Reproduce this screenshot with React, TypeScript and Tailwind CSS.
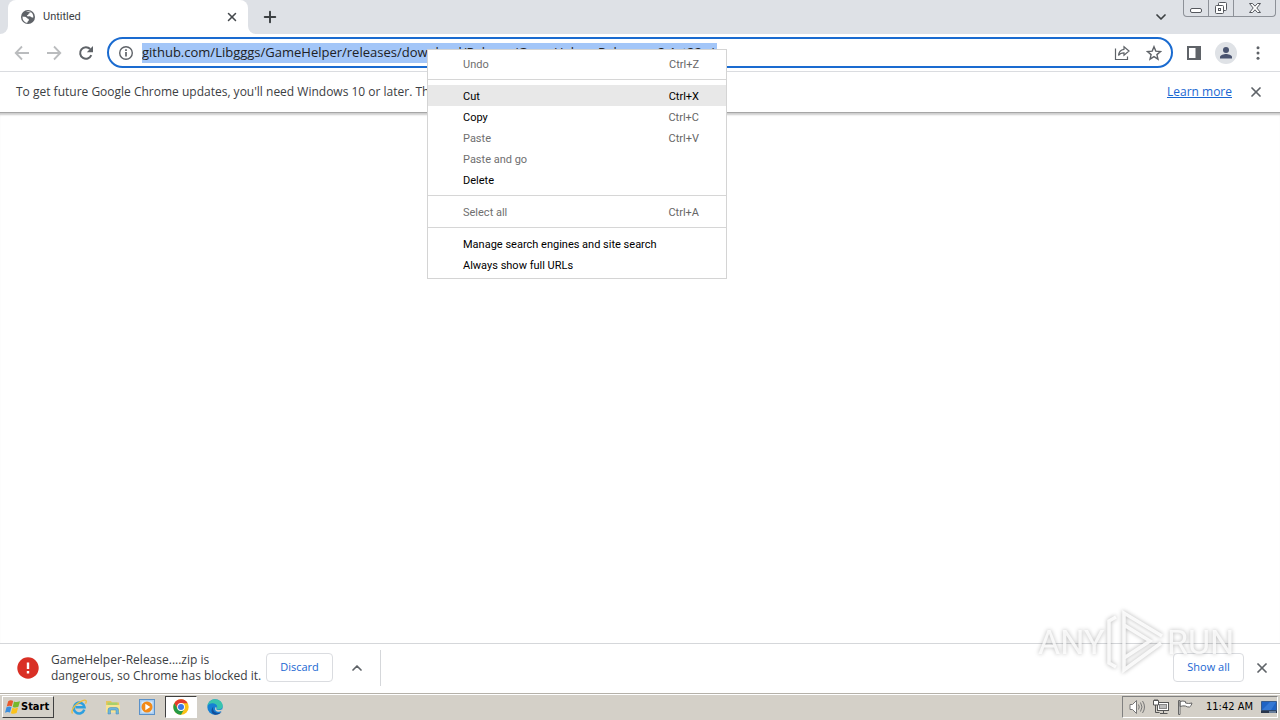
import type { ReactNode } from "react";
import { ChevronDown, ChevronUp, Plus, X } from "lucide-react";

interface MenuEntry {
  label: string;
  shortcut?: string;
  disabled?: boolean;
  active?: boolean;
}

const menuGroups: MenuEntry[][] = [
  [{ label: "Undo", shortcut: "Ctrl+Z", disabled: true }],
  [
    { label: "Cut", shortcut: "Ctrl+X", active: true },
    { label: "Copy", shortcut: "Ctrl+C" },
    { label: "Paste", shortcut: "Ctrl+V", disabled: true },
    { label: "Paste and go", disabled: true },
    { label: "Delete" },
  ],
  [{ label: "Select all", shortcut: "Ctrl+A", disabled: true }],
  [
    { label: "Manage search engines and site search" },
    { label: "Always show full URLs" },
  ],
];

const GlobeIcon = () => (
  <svg viewBox="0 0 16 16" className="size-4">
    <circle cx="8" cy="8" r="7" fill="#5f6368" />
    <path d="M2.500 7.500c2 .2 3.600.3 4.400 1.500.6 1 2.200.6 2 2-.2 1.200-1.600 1.300-1.700 3A6 6 0 0 1 2.500 7.500zM6 2.500c1.500-.5 3.500-.5 4.700.3-.2 1.200-1 1.400-1.800 1.700-.6.3-.3 1.300-1.200 1.500-.9.1-1 1-.3 1.300 1.200.3 1.800-.4 2.900.1.900.5 1.700 1.200 3 1 .2-2-.5-3.700-1.800-4.900" fill="#fff" />
  </svg>
);

const BackIcon = () => (
  <svg viewBox="0 0 16 16" className="size-4" fill="none" stroke="#babcbe" strokeWidth="1.8">
    <path d="M15 8H2M8 1.500 1.700 8 8 14.500" />
  </svg>
);

const ForwardIcon = () => (
  <svg viewBox="0 0 16 16" className="size-4" fill="none" stroke="#babcbe" strokeWidth="1.8">
    <path d="M1 8h13M8 1.500 14.300 8 8 14.500" />
  </svg>
);

const ReloadIcon = () => (
  <svg viewBox="0 0 16 16" className="size-4">
    <path d="M13.300 10.200A5.800 5.800 0 1 1 12.200 4" fill="none" stroke="#5f6368" strokeWidth="2" />
    <path d="M15 1v6.200H8.800z" fill="#5f6368" />
  </svg>
);

const InfoIcon = () => (
  <svg viewBox="0 0 16 16" className="size-4 shrink-0">
    <circle cx="8" cy="8" r="6.300" fill="none" stroke="#5f6368" strokeWidth="1.400" />
    <path d="M8 7v4.500M8 4.200v1.700" stroke="#5f6368" strokeWidth="1.700" />
  </svg>
);

const ShareIcon = () => (
  <svg viewBox="0 0 16 16" className="size-4" fill="none" stroke="#5f6368" strokeWidth="1.200">
    <path d="M1.500 3.500v11h12v-3" />
    <path d="M10 1.800 15 6l-5 4.200V7.800c-2.500 0-4.300.8-5.500 2.700.3-3.300 2.200-5.700 5.500-6.200z" />
  </svg>
);

const StarIcon = () => (
  <svg viewBox="0 0 16 16" className="size-4" fill="none" stroke="#5f6368" strokeWidth="1.400">
    <path d="m8 1.700 1.800 4.400 4.700.4-3.600 3.100 1.100 4.600L8 11.700l-4 2.500 1.100-4.600L1.500 6.500l4.700-.4z" />
  </svg>
);

const SidePanelIcon = () => (
  <svg viewBox="0 0 16 16" className="size-4">
    <path d="M1 1h14v14H1zM3 3v10h6.500V3z" fill="#5f6368" fillRule="evenodd" />
  </svg>
);

const ProfileIcon = () => (
  <svg viewBox="0 0 22 22" className="size-[22px]">
    <circle cx="11" cy="11" r="11" fill="#dfe2e6" />
    <circle cx="11" cy="8" r="3" fill="#4a5470" />
    <path d="M5 16.500v-1.500c0-2 4-3 6-3s6 1 6 3v1.500z" fill="#4a5470" />
  </svg>
);

const MoreIcon = () => (
  <svg viewBox="0 0 16 16" className="size-4" fill="#5f6368">
    <circle cx="8" cy="2.800" r="1.500" />
    <circle cx="8" cy="8" r="1.500" />
    <circle cx="8" cy="13.200" r="1.500" />
  </svg>
);

const MinimizeGlyph = () => (
  <svg viewBox="0 0 14 14" className="size-3.5">
    <rect x="1.500" y="7.500" width="11" height="4" rx="1.500" fill="#fff" stroke="#55585e" />
  </svg>
);

const RestoreGlyph = () => (
  <svg viewBox="0 0 14 14" className="size-3.5" fill="#fff" stroke="#55585e">
    <rect x="4.500" y="1.500" width="8" height="8" rx="1" />
    <rect x="1.500" y="4.500" width="8" height="8" rx="1" />
    <rect x="4.500" y="7.500" width="2" height="2" />
  </svg>
);

const CloseGlyph = () => (
  <svg viewBox="0 0 14 14" className="size-3.5" fill="#fff" stroke="#55585e">
    <path d="M1.500 2.500h3L7 5.200l2.500-2.700h3L8.800 7l3.700 4.500h-3L7 8.800l-2.500 2.700h-3L5.200 7z" />
  </svg>
);

const AlertIcon = () => (
  <svg viewBox="0 0 22 22" className="size-[22px] shrink-0">
    <circle cx="11" cy="11" r="10.700" fill="#d93025" />
    <path d="M11 5.500v6.500M11 14v2.500" stroke="#fff" strokeWidth="2.400" />
  </svg>
);

const WindowsLogo = () => (
  <svg viewBox="0 0 16 16" className="size-4">
    <path d="M3.200 2.200C5 1 6.500 1.100 8.200 2L6.800 7.300C5.200 6.500 3.700 6.500 1.700 7.500z" fill="#e8592b" />
    <path d="M9 2.500c1.700.9 3.500.7 6-.2l-1.600 5.500c-2 1-3.800 1-5.700.2z" fill="#76b82a" />
    <path d="M1.500 8.300c1.900-1 3.300-1 5-.2L5 13.500C3.400 12.700 1.800 12.700 0 13.700z" fill="#3a8ede" />
    <path d="M7.400 8.800c1.900.8 3.600.8 5.700-.2l-1.500 5.400c-2.100 1-3.900 1-5.700.2z" fill="#fbc21b" />
  </svg>
);

const IeIcon = () => (
  <svg viewBox="0 0 16 16" className="size-4" fill="none">
    <path d="M13.300 10.700A5.400 5.400 0 1 1 13.500 8.300H4.500" stroke="#2d9fdf" strokeWidth="2.500" />
    <path d="M1.500 14.500c-1.700-2.500 1-7 5-10C10 1.800 14 .2 15 1.700c.5.800.1 2-.5 3" stroke="#eebd3c" strokeWidth="1.300" />
  </svg>
);

const ExplorerIcon = () => (
  <svg viewBox="0 0 16 16" className="size-4">
    <path d="M1 2h5l1 1.500h7V13H1z" fill="#e8c55b" />
    <path d="M2.500 3.500h10V7h-10z" fill="#a8d06b" />
    <path d="M1 6h14v7.500H1z" fill="#f8e493" />
    <path d="M3 15V11q0-2.500 2.500-2.500h5.500q2.500 0 2.500 2.500v4h-2.500v-4H5.500v4z" fill="#6db5dc" stroke="#4089b6" strokeWidth=".5" />
  </svg>
);

const MediaIcon = () => (
  <svg viewBox="0 0 16 16" className="size-4">
    <rect x=".5" y=".5" width="15" height="15" fill="#a9cdf0" stroke="#5a91c9" />
    <rect x="2.500" y="2.500" width="11" height="11" fill="#d9ebfb" />
    <circle cx="8" cy="8" r="5.500" fill="#f28a18" />
    <path d="M6.300 4.800 11.300 8l-5 3.200z" fill="#fff" />
  </svg>
);

const ChromeIcon = () => (
  <svg viewBox="0 0 16 16" className="size-4">
    <circle cx="8" cy="8" r="7.700" fill="#fbc116" />
    <path d="M1.300 4.200A7.700 7.700 0 0 1 14.700 4.200H8L4.700 10z" fill="#e33b2e" />
    <path d="M1.300 4.200A7.700 7.700 0 0 0 8 15.700L11.300 10 8 12 4.700 10z" fill="#259a45" />
    <circle cx="8" cy="8" r="3.900" fill="#fff" />
    <circle cx="8" cy="8" r="3" fill="#3b78e7" />
  </svg>
);

const EdgeIcon = () => (
  <svg viewBox="0 0 16 16" className="size-4">
    <circle cx="8" cy="8" r="7.700" fill="#1681d4" />
    <path d="M.4 7.300C1 3 4.300.3 8 .3c4.500 0 7.700 3 7.700 6.500 0 2.300-1.700 3.800-4 3.800-1.500 0-2.500-.6-2.300-1.200.6-.6.800-1 .8-1.700C10.200 5.500 8 4.300 5.500 4.300 3 4.300 1.200 5.500.4 7.300z" fill="#38c4ae" />
    <path d="M6.500 7.500c-1.500 3 .7 6.300 4.300 6.500 1.600.1 3-.4 4-1.200-1.500 2-4 3.100-6.800 2.900C4.500 15.200 3 11 6.500 7.500z" fill="#124f9c" />
    <path d="M9.400 9.400c-.4.900.8 1.700 2.500 1.700 1.500 0 3-.6 3.800-1.700l-.3 2.200c-1.500 1.500-5.500 1.700-7-.4-.7-1.200-.2-2.800.8-3.400z" fill="#d4d0c8" />
  </svg>
);

const VolumeIcon = () => (
  <svg viewBox="0 0 16 16" className="size-4" fill="none" stroke="#777">
    <path d="M1 5.500h2.500l4-4v13l-4-4H1z" fill="#fff" />
    <path d="M9.500 5.500q1.500 2.500 0 5M11.500 3.500q3 4.500 0 9M13.500 2q4 6 0 12" />
  </svg>
);

const NetworkIcon = () => (
  <svg viewBox="0 0 16 16" className="size-4" fill="#fff" stroke="#555">
    <rect x="4.500" y="3.500" width="11" height="8" />
    <rect x="6.500" y="5.500" width="7" height="4" fill="#bbb" stroke="#888" />
    <path d="M7 14.500h7.500M10.500 12v2M2.500 6v7.500h4" fill="none" />
    <path d="M.5 1.500h5v4.500h-5zM2 0v2M4 0v2" />
  </svg>
);

const FlagIcon = () => (
  <svg viewBox="0 0 16 16" className="size-4" fill="#fff" stroke="#666">
    <path d="M1.500 1.500H3V15.500H1.500zM3 2.500q3-1 5.500 0v1.500q3 1 6.500 0-.5 3-2.500 4-2 .3-4-1-2.500-.5-5.500.5z" />
  </svg>
);

const DesktopIcon = () => (
  <svg viewBox="0 0 16 14" className="h-3.5 w-4">
    <path d="M.5 1.500h15v9H.5z" fill="#1f63c4" stroke="#375b8c" />
    <path d="M1 10 9 2h6L10 10z" fill="#3478d4" />
    <path d="M0 10.500h16V13H0z" fill="#29364b" />
    <path d="M8 12h7" stroke="#a8c5ea" />
  </svg>
);

const Watermark = () => (
  <svg
    viewBox="0 0 200 70"
    className="pointer-events-none absolute right-[43px] bottom-[43px] h-[70px] w-[200px] drop-shadow-[0_0_2px_rgba(0,0,0,0.35)]"
    fill="none"
    stroke="#fff"
    strokeOpacity=".85"
  >
    <g fill="#fff" fillOpacity=".8" stroke="none" fontFamily="'Liberation Sans Narrow', Roboto, sans-serif" fontSize="34">
      <text x="1" y="47">ANY</text>
      <text x="130" y="47">RUN</text>
    </g>
    <path d="M79 10 72 14v42l7 4M124 36 87 63V6l38 23M87 18v33l26-17z" strokeWidth="3.500" />
  </svg>
);

interface TaskButtonProps {
  label: string;
  active?: boolean;
  children: ReactNode;
}

const TaskButton = ({ label, active, children }: TaskButtonProps) => (
  <button
    type="button"
    aria-label={label}
    className={
      active
        ? "flex h-[22px] w-8 items-center justify-center border border-t-[#404040] border-r-white border-b-white border-l-[#404040] bg-white"
        : "flex h-[22px] w-8 items-center justify-center"
    }
  >
    {children}
  </button>
);

const TabStrip = () => (
  <header className="flex h-[34px] items-stretch bg-[#dee1e6]">
    <div className="w-2 bg-white">
      <div className="h-full rounded-br-lg bg-[#dee1e6]" />
    </div>
    <div className="flex w-60 items-center rounded-t-lg bg-white pr-2 pl-3">
      <GlobeIcon />
      <span className="ml-[7px] flex-1 font-[Roboto,sans-serif] text-[11px] text-[#3c4043]">Untitled</span>
      <button type="button" aria-label="Close tab" className="flex size-4 items-center justify-center">
        <X className="size-3.5 text-[#45494d]" strokeWidth={2.6} />
      </button>
    </div>
    <div className="w-2 bg-white">
      <div className="h-full rounded-bl-lg bg-[#dee1e6]" />
    </div>
    <button type="button" aria-label="New tab" className="ml-1 flex w-5 items-center justify-center">
      <Plus className="size-[18px] text-[#3c4043]" strokeWidth={2.6} />
    </button>
    <div className="flex-1" />
    <button type="button" aria-label="Search tabs" className="mr-3.5 flex w-4 items-center justify-center">
      <ChevronDown className="size-4 text-[#3c4043]" strokeWidth={2.6} />
    </button>
    <div className="mr-1 flex h-[17px] overflow-hidden rounded-b border border-t-0 border-[#8d9198]">
      <button type="button" aria-label="Minimize" className="flex w-[25px] items-center justify-center border-r border-[#8d9198]">
        <MinimizeGlyph />
      </button>
      <button type="button" aria-label="Restore" className="flex w-[25px] items-center justify-center border-r border-[#8d9198]">
        <RestoreGlyph />
      </button>
      <button type="button" aria-label="Close" className="flex w-[41px] items-center justify-center">
        <CloseGlyph />
      </button>
    </div>
  </header>
);

const Toolbar = () => (
  <div className="flex h-[38px] items-center border-b border-[#dadce0] bg-white px-3.5">
    <div className="flex items-center gap-4">
      <button type="button" aria-label="Back"><BackIcon /></button>
      <button type="button" aria-label="Forward"><ForwardIcon /></button>
      <button type="button" aria-label="Reload"><ReloadIcon /></button>
    </div>
    <div className="ml-[13px] flex h-[31px] flex-1 items-center rounded-full border-2 border-[#1a6bd0] bg-white px-[9px]">
      <InfoIcon />
      <input
        type="text"
        aria-label="Address and search bar"
        defaultValue="github.com/Libgggs/GameHelper/releases/download/Release/GameHelper.Release.v.3.1st32.zip"
        className="ml-2 h-5 w-[575px] min-w-0 bg-[#a3c6f8] pb-0.5 text-[13px] text-[#202124] outline-none"
      />
      <div className="flex-1" />
      <div className="flex gap-4">
        <button type="button" aria-label="Share"><ShareIcon /></button>
        <button type="button" aria-label="Bookmark"><StarIcon /></button>
      </div>
    </div>
    <div className="ml-[13px] flex items-center gap-[13px]">
      <button type="button" aria-label="Side panel"><SidePanelIcon /></button>
      <button type="button" aria-label="Profile"><ProfileIcon /></button>
      <button type="button" aria-label="Menu"><MoreIcon /></button>
    </div>
  </div>
);

const UpdateBar = () => (
  <div className="flex h-10 items-center bg-white px-4 text-[12px] text-[#3c4043]">
    <p className="flex-1">
      To get future Google Chrome updates, you'll need Windows 10 or later. This computer is using Windows 7.
    </p>
    <a href="#learn-more" className="text-[#1967d2] underline">Learn more</a>
    <button type="button" aria-label="Dismiss" className="ml-4">
      <X className="size-4 text-[#5f6368]" strokeWidth={2.6} />
    </button>
  </div>
);

const ContextMenu = () => (
  <div role="menu" className="absolute top-[49px] left-[427px] w-[300px] border border-[#d4d4d4] bg-white py-[3px] font-[Roboto,sans-serif] text-[11px]">
    {menuGroups.map((group, index) => (
      <div key={index}>
        {index > 0 && <div className="my-[5px] h-px bg-[#d6d6d6]" />}
        {group.map((item) => (
          <button
            key={item.label}
            type="button"
            role="menuitem"
            disabled={item.disabled}
            className={`flex h-[21px] w-full items-center justify-between pt-1 pr-[27px] pl-[35px] ${
              item.active ? "bg-[#e8e8e8]" : ""
            } ${item.disabled ? "text-[#6f6f6f]" : "text-black"}`}
          >
            <span>{item.label}</span>
            <span className={item.active ? "" : "text-[#666]"}>{item.shortcut}</span>
          </button>
        ))}
      </div>
    ))}
  </div>
);

const DownloadShelf = () => (
  <div className="flex h-[50px] items-center border-t border-[#d5d7da] bg-white pr-2.5 pb-0.5 pl-[17px]">
    <AlertIcon />
    <p className="ml-3 w-[207px] text-[12px] leading-4 whitespace-nowrap text-[#3c4043]">
      GameHelper-Release....zip is
      <br />
      dangerous, so Chrome has blocked it.
    </p>
    <button type="button" className="ml-2 h-[29px] w-[67px] rounded border border-[#dadce0] text-[11px] text-[#1967d2]">
      Discard
    </button>
    <button type="button" aria-label="More options" className="ml-4">
      <ChevronUp className="size-4 text-[#5f6368]" strokeWidth={2.6} />
    </button>
    <div className="ml-[15px] h-9 w-px bg-[#d5d7da]" />
    <div className="flex-1" />
    <button type="button" className="h-[29px] w-[71px] rounded border border-[#dadce0] text-[11px] text-[#1967d2]">
      Show all
    </button>
    <button type="button" aria-label="Close downloads" className="ml-2.5">
      <X className="size-4 text-[#5f6368]" strokeWidth={2.6} />
    </button>
  </div>
);

const Taskbar = () => (
  <footer className="flex h-[27px] items-center border-t border-[#b5b1a9] bg-[#d4d0c8] px-0.5 shadow-[inset_0_1px_0_#fff]">
    <button
      type="button"
      className="flex h-[22px] w-[52px] items-center border border-t-white border-r-[#404040] border-b-[#404040] border-l-white pl-0.5 font-['DejaVu_Sans_Condensed',sans-serif] text-[11px] font-bold text-black"
    >
      <WindowsLogo />
      Start
    </button>
    <nav className="ml-[9px] flex gap-0.5">
      <TaskButton label="Internet Explorer"><IeIcon /></TaskButton>
      <TaskButton label="Windows Explorer"><ExplorerIcon /></TaskButton>
      <TaskButton label="Media Player"><MediaIcon /></TaskButton>
      <TaskButton label="Google Chrome" active><ChromeIcon /></TaskButton>
      <TaskButton label="Microsoft Edge"><EdgeIcon /></TaskButton>
    </nav>
    <div className="flex-1" />
    <div className="flex h-[22px] items-center gap-2 border border-t-[#808080] border-r-white border-b-white border-l-[#808080] pl-1.5 text-[11px] text-black">
      <VolumeIcon />
      <NetworkIcon />
      <FlagIcon />
      <span className="ml-[5px] font-['DejaVu_Sans_Condensed',sans-serif]">11:42 AM</span>
      <DesktopIcon />
    </div>
  </footer>
);

const App = () => {
  return (
    <div className="relative flex min-h-screen flex-col bg-white font-['Open_Sans','Noto_Sans',sans-serif]">
      <TabStrip />
      <Toolbar />
      <UpdateBar />
      <main className="flex-1 border-t border-[#a6a6a6] shadow-[inset_0_3px_2px_-1px_rgba(0,0,0,0.2)]" />
      <DownloadShelf />
      <Taskbar />
      <Watermark />
      <ContextMenu />
    </div>
  );
};

export default App;
